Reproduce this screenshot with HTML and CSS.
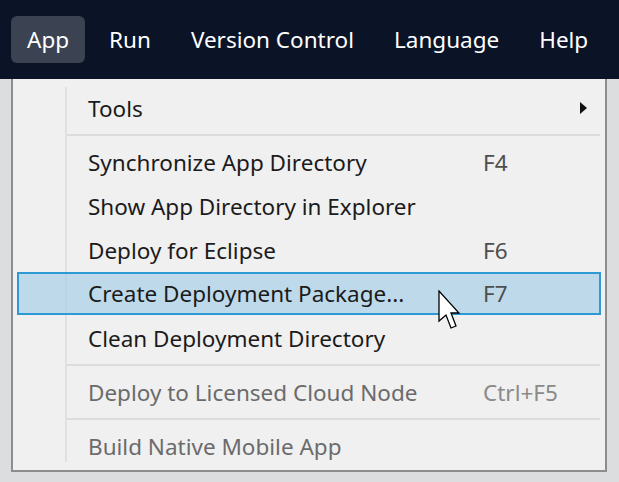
FILE: index.html
```html
<!DOCTYPE html>
<html>
<head>
<meta charset="utf-8">
<link rel="stylesheet" href="styles.css">
</head>
<body>
<nav class="menubar">
  <div class="mb-item active">App</div>
  <div class="mb-item">Run</div>
  <div class="mb-item">Version Control</div>
  <div class="mb-item">Language</div>
  <div class="mb-item">Help</div>
</nav>
<div class="menu">
  <div class="item"><span class="label">Tools</span><span class="sub"></span></div>
  <div class="sep"></div>
  <div class="item"><span class="label">Synchronize App Directory</span><span class="key">F4</span></div>
  <div class="item"><span class="label">Show App Directory in Explorer</span><span class="key"></span></div>
  <div class="item"><span class="label">Deploy for Eclipse</span><span class="key">F6</span></div>
  <div class="item hl"><span class="label">Create Deployment Package...</span><span class="key">F7</span>
    <svg class="cursor" width="22" height="42" viewBox="0 0 22 42"><path d="M1 1 L1 31 L8 25 L13 38 L18 36 L13 23 L21 23 Z" fill="#fff" stroke="#000" stroke-width="1.3" stroke-linejoin="miter"/></svg>
  </div>
  <div class="item"><span class="label">Clean Deployment Directory</span><span class="key"></span></div>
  <div class="sep"></div>
  <div class="item dis"><span class="label">Deploy to Licensed Cloud Node</span><span class="key">Ctrl+F5</span></div>
  <div class="sep"></div>
  <div class="item dis"><span class="label">Build Native Mobile App</span><span class="key"></span></div>
</div>
</body>
</html>
```
FILE: styles.css
```css
html, body { margin: 0; padding: 0; }
body {
  background: #dcdddf;
  font-family: "Noto Sans", "Open Sans", sans-serif;
  width: 619px;
  height: 482px;
  overflow: hidden;
}
.menubar {
  height: 79px;
  background: #0b1327;
  display: flex;
  align-items: center;
  gap: 8px;
  padding-left: 11px;
  box-sizing: border-box;
}
.mb-item {
  color: #ffffff;
  font-size: 22.5px;
  height: 47px;
  line-height: 47px;
  padding: 0 16px;
  border-radius: 6px;
}
.mb-item.active { background: #3b4352; }
.menu {
  position: relative;
  margin-left: 11px;
  width: 596px;
  height: 393px;
  box-sizing: border-box;
  border: 2px solid #8d8d8d;
  border-top: none;
  background: #f0f0f0;
  padding: 7px 4px 0;
}
.menu::before {
  content: "";
  position: absolute;
  left: 52px;
  top: 8px;
  bottom: 8px;
  width: 2px;
  background: #e0e0e0;
}
.item {
  position: relative;
  height: 44px;
  display: flex;
  align-items: center;
  font-size: 22.5px;
  color: #1b1b1b;
  box-sizing: border-box;
  border: 2px solid transparent;
}
.label { margin-left: 69px; flex: 1; }
.key { width: 116px; color: #4e4e4e; }
.sub {
  width: 0; height: 0;
  border-left: 7px solid #111;
  border-top: 6px solid transparent;
  border-bottom: 6px solid transparent;
  margin-right: 12px;
}
.item.hl {
  background: rgba(160, 205, 230, 0.62);
  border-color: #2d9ad6;
  height: 43px;
  margin-bottom: 1px;
}
.item.dis { color: #6b6b6b; }
.item.dis .key { color: #8a8a8a; }
.sep {
  height: 10px;
  position: relative;
}
.sep::after {
  content: "";
  position: absolute;
  left: 50px;
  right: 1px;
  top: 4px;
  height: 2px;
  background: #dcdcdc;
}
.cursor {
  position: absolute;
  left: 419px;
  top: 16px;
}
```
